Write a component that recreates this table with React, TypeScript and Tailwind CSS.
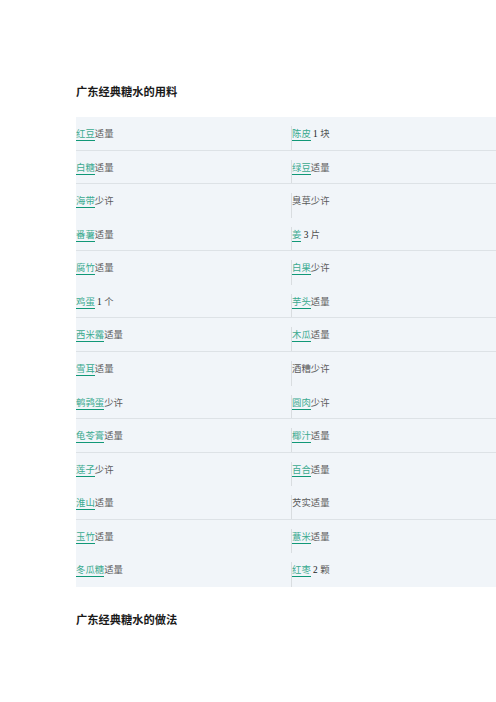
import React from "react";

type Item = { link?: string; rest: string; num?: boolean };

const rows: [Item, Item, boolean][] = [
  [{ link: "红豆", rest: "适量" }, { link: "陈皮", rest: " 1 块", num: true }, true],
  [{ link: "白糖", rest: "适量" }, { link: "绿豆", rest: "适量" }, true],
  [{ link: "海带", rest: "少许" }, { rest: "臭草少许" }, false],
  [{ link: "番薯", rest: "适量" }, { link: "姜", rest: " 3 片", num: true }, true],
  [{ link: "腐竹", rest: "适量" }, { link: "白果", rest: "少许" }, false],
  [{ link: "鸡蛋", rest: " 1 个", num: true }, { link: "芋头", rest: "适量" }, true],
  [{ link: "西米露", rest: "适量" }, { link: "木瓜", rest: "适量" }, true],
  [{ link: "雪耳", rest: "适量" }, { rest: "酒糟少许" }, false],
  [{ link: "鹌鹑蛋", rest: "少许" }, { link: "圆肉", rest: "少许" }, true],
  [{ link: "龟苓膏", rest: "适量" }, { link: "椰汁", rest: "适量" }, true],
  [{ link: "莲子", rest: "少许" }, { link: "百合", rest: "适量" }, false],
  [{ link: "淮山", rest: "适量" }, { rest: "芡实适量" }, true],
  [{ link: "玉竹", rest: "适量" }, { link: "薏米", rest: "适量" }, false],
  [{ link: "冬瓜糖", rest: "适量" }, { link: "红枣", rest: " 2 颗", num: true }, false],
];

function Text({ item }: { item: Item }) {
  return (
    <span className="whitespace-pre leading-[11px]">
      {item.link && (
        <span className="text-[#3aaa8f] border-b border-[#119877] pb-[1px]">{item.link}</span>
      )}
      {item.num ? (
        <span className="text-[#555]">
          {item.rest.split("").map((c, i) =>
            /[0-9]/.test(c) ? (
              <span key={i} className="text-[#222]">{c}</span>
            ) : (
              <span key={i}>{c}</span>
            )
          )}
        </span>
      ) : (
        <span className="text-[#5a5a5a]">{item.rest}</span>
      )}
    </span>
  );
}

export default function App() {
  return (
    <div
      className="w-[496px] h-[702px] bg-white overflow-hidden pl-[76px]"
      style={{ fontFamily: '"Liberation Serif", "Noto Sans CJK SC", serif' }}
    >
      <div className="pt-[85px] h-[117px] text-[11.25px] leading-[14px] font-bold text-[#1a1a1a]">
        广东经典糖水的用料
      </div>
      <div className="w-[430px] bg-[#f1f5f9] text-[9.4px]">
        {rows.map(([l, r, border], i) => (
          <div
            key={i}
            className={`flex h-[33.57px] ${border ? "border-b border-[#dde2e6]" : ""}`}
          >
            <div className="w-[215px] pt-[10px]">
              <Text item={l} />
            </div>
            <div className="flex-1 pt-[9px]">
              <div className="h-full border-l border-[#d9dde0] pt-[1px]">
                <Text item={r} />
              </div>
            </div>
          </div>
        ))}
      </div>
      <div className="pt-[26px] text-[11.25px] leading-[14px] font-bold text-[#1a1a1a]">
        广东经典糖水的做法
      </div>
    </div>
  );
}
